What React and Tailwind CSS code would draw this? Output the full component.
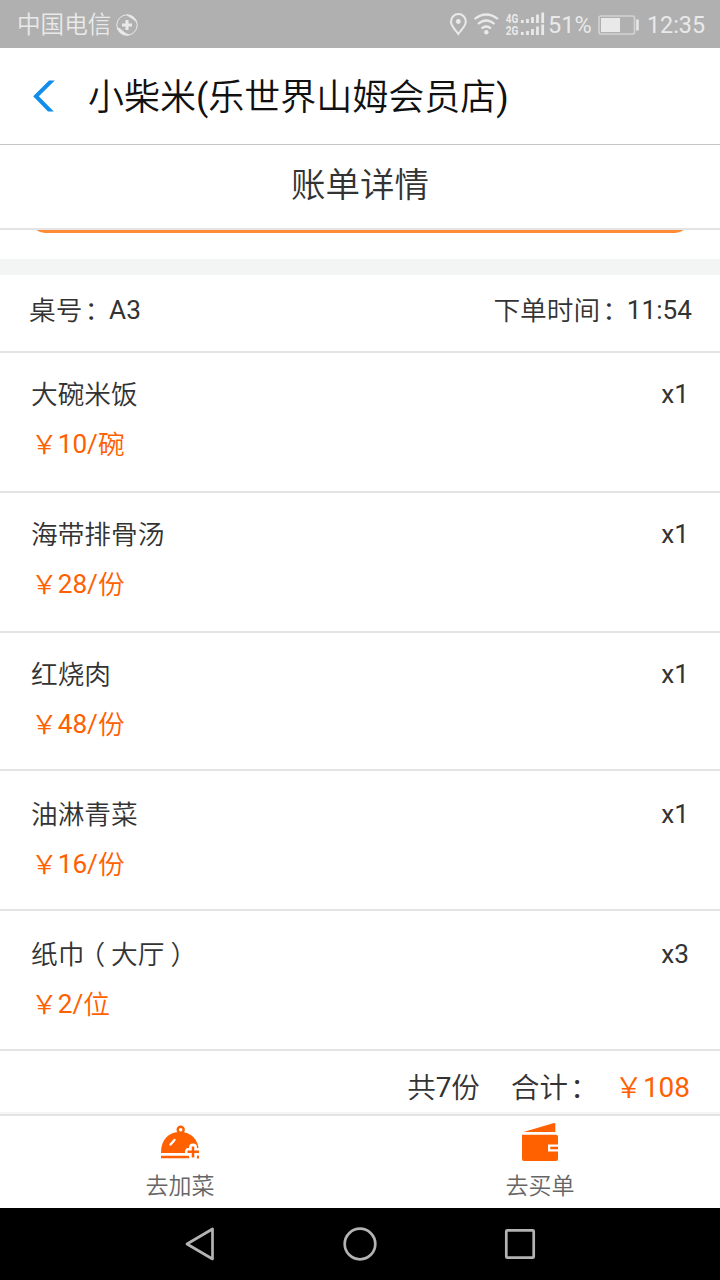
import React from "react";

const items = [
  { name: "大碗米饭", price: "10", unit: "碗", qty: "x1", row: "h-[140px] pt-[22px]" },
  { name: "海带排骨汤", price: "28", unit: "份", qty: "x1", row: "h-[140px] pt-[22px]" },
  { name: "红烧肉", price: "48", unit: "份", qty: "x1", row: "h-[138px] pt-[22px]" },
  { name: "油淋青菜", price: "16", unit: "份", qty: "x1", row: "h-[140px] pt-[24px]" },
  { name: "纸巾（大厅）", price: "2", unit: "位", qty: "x3", row: "h-[140px] pt-[24px]" },
];

const punctuation = {
  "（": "ml-[-6px] mr-[6px]",
  "）": "ml-[6px] mr-[-6px]",
  "：": "ml-[2px] mr-[-2px]",
};

function Zh({ children }) {
  return (
    <span className="whitespace-nowrap font-[350]">
      {children.split(/([（）：])/).map((part, i) =>
        punctuation[part] ? <span key={i} className={punctuation[part]}>{part}</span> : part
      )}
    </span>
  );
}

function Num({ children }) {
  return <span className="inline-block -translate-y-px text-[0.98em]">{children}</span>;
}

function StatusBar() {
  return (
    <header className="flex h-12 items-center bg-[#b0b0b0] pl-[17px] pr-[15px] text-[#e9e9e9]">
      <span className="pt-[3px] text-[23.6px] font-[350] leading-[45px]">中国电信</span>
      <svg className="ml-[4px] mt-[2px] h-6 w-6" viewBox="0 0 24 24" fill="none">
        <circle cx="12" cy="12" r="10.2" stroke="currentColor" strokeWidth="1" />
        <path d="M12 2 C16 2 20 4 21.500 9 C18.500 5.500 15 4.500 12 2Z M2.500 15 C6 15 8 20 14 21.800 C8 23 4 20 2.500 15Z" fill="currentColor" stroke="currentColor" strokeWidth="0.8" />
        <path d="M12 7v10M7 12h10" stroke="currentColor" strokeWidth="3" />
      </svg>
      <div className="flex-1" />
      <svg className="h-12 w-[98px] shrink-0" viewBox="449 0 98 48" fill="none" stroke="currentColor">
        <path d="M458.3 34 C455 29.5 451 26 451 21.5 A7.4 7.4 0 0 1 465.8 21.5 C465.8 26 461.6 29.500 458.300 34Z" strokeWidth="2" />
        <circle cx="458.300" cy="21.500" r="2.400" fill="currentColor" stroke="none" />
        <path d="M474.500 19 Q486.200 10 498 19 M478 24 Q486.200 17 494.500 24 M481.500 28.500 Q486.200 24.500 491 28.500" strokeWidth="2.200" />
        <circle cx="486.300" cy="32.300" r="2.200" fill="currentColor" stroke="none" />
        <text x="505.700" y="22.800" fill="currentColor" stroke="none" fontFamily="Roboto, sans-serif" fontWeight="700" fontSize="12.500" textLength="12.500" lengthAdjust="spacingAndGlyphs">4G</text>
        <text x="505.700" y="35" fill="currentColor" stroke="none" fontFamily="Roboto, sans-serif" fontWeight="700" fontSize="12.500" textLength="12.500" lengthAdjust="spacingAndGlyphs">2G</text>
        <path d="M522.300 20v3M527.500 19v4M532.500 17v6M537.500 14.500v8.500M542.700 12.500v10.500M522.300 32v3M527.500 31v4M532.500 29v6M537.500 26.500v8.500M542.700 24.500v10.500" strokeWidth="2.800" />
      </svg>
      <span className="ml-px w-[49px] pt-[3px] text-[23.500px] leading-[45px]">51%</span>
      <svg className="h-12 w-[42px] shrink-0" viewBox="597 0 42 48" fill="none">
        <rect x="599" y="16" width="35.500" height="18" rx="2" stroke="#d2d2d2" strokeWidth="1.700" />
        <path d="M601 18h19v14h-19z M636.200 19.500h2.500v11h-2.500z" fill="currentColor" />
      </svg>
      <span className="ml-[8px] pt-[2px] text-[23.300px] leading-[46px]">12:35</span>
    </header>
  );
}

function Item({ item }) {
  return (
    <li className={`${item.row} flex justify-between border-b-2 border-[#e4e4e4] pl-[31px] pr-[31px] text-[26.7px] leading-[40px] text-[#333]`}>
      <div>
        <p><Zh>{item.name}</Zh></p>
        <p className="mt-[10px] text-[#ff6000]">
          <Zh>￥</Zh><Num>{item.price}/</Num><Zh>{item.unit}</Zh>
        </p>
      </div>
      <Num>{item.qty}</Num>
    </li>
  );
}

function AddDishIcon() {
  return (
    <svg className="ml-[2px] h-[38px] w-[42px]" viewBox="160 1124 42 38">
      <circle cx="180.700" cy="1129.700" r="3" fill="none" stroke="#ff6000" strokeWidth="2.400" />
      <path d="M161 1153 C161 1139 169 1132 180 1132 C191 1132 199 1139 199 1153Z M161 1155.700h38v2.500h-38z" fill="#ff6000" />
      <path d="M170.500 1144.500l4-4.500" stroke="#fff" strokeWidth="2.400" strokeLinecap="round" />
      <path d="M193 1147.500v9M189 1151.700h8" stroke="#fff" strokeWidth="8" strokeLinecap="round" />
      <path d="M193 1146.500v11M187.500 1151.700h11.500" stroke="#ff6000" strokeWidth="2.500" />
      <path d="M197 1155.700h2v2.500h-2z" fill="#ff6000" />
    </svg>
  );
}

function WalletIcon() {
  return (
    <svg className="h-[40px] w-[38px]" viewBox="521 1122 38 40">
      <path d="M523.500 1132 L554 1123 Q555.300 1122.700 555.300 1124 V1132Z" fill="#ff6000" />
      <path d="M522 1134.700H556Q558 1134.700 558 1136.700V1144.500H548V1151.500H558V1159Q558 1161 556 1161H524Q522 1161 522 1159Z" fill="#ff6000" />
      <path d="M550.300 1146.700h7.700v2.600h-7.700z" fill="#ff6000" />
    </svg>
  );
}

export default function App() {
  return (
    <div className="flex h-[1280px] w-[720px] flex-col overflow-hidden bg-white font-['Roboto','Noto_Sans_CJK_SC',sans-serif]">
      <StatusBar />
      <div className="flex h-[97px] items-center border-b border-[#c4c4c4] pl-[32px]">
        <svg className="h-8 w-6" viewBox="0 0 24 32" fill="none">
          <path d="M22.800 0.500H17L1.200 16.300 16 31.500H21.800L6.800 16.300Z" fill="#108ee9" />
        </svg>
        <h1 className="ml-[32px] pt-[4px] text-[36px] font-normal leading-[92px] text-[#111]">
          <Zh>小柴米</Zh>(<Zh>乐世界山姆会员店</Zh>)
        </h1>
      </div>
      <div className="h-[85px] border-b-2 border-[#e4e4e4] text-center text-[34.500px] font-[350] leading-[81px] text-[#333]">账单详情</div>
      <div className="h-[29px] px-[31px]">
        <div className="flex h-[3px] flex-col justify-end overflow-hidden">
          <div className="h-10 shrink-0 rounded-[14px] bg-[#ff8c34]" />
        </div>
      </div>
      <div className="h-4 bg-[#f3f5f5]" />
      <div className="flex h-[78px] justify-between whitespace-nowrap border-b-2 border-[#e4e4e4] pl-[29px] pr-[28px] text-[26.700px] leading-[72px] text-[#333]">
        <span><Zh>桌号：</Zh><Num>A3</Num></span>
        <span><Zh>下单时间：</Zh><Num>11:54</Num></span>
      </div>
      <ul>
        {items.map((item) => <Item key={item.name} item={item} />)}
      </ul>
      <div className="flex h-[63px] justify-end whitespace-nowrap pr-[30px] text-[28.500px] leading-[75px] text-[#333]">
        <span><Zh>共</Zh><Num>7</Num><Zh>份</Zh></span>
        <span className="ml-[31px]"><Zh>合计：</Zh></span>
        <span className="ml-[18px] text-[#ff6000]"><Zh>￥</Zh><Num>108</Num></span>
      </div>
      <nav className="grid h-[94px] grid-cols-2 border-t-2 border-[#e4e4e4] shadow-[0_-2px_0_#f5f5f5]">
        <div className="flex flex-col items-center pt-[8px]">
          <AddDishIcon />
          <span className="mt-[9px] text-[23px] font-[350] leading-[32px] text-[#666]">去加菜</span>
        </div>
        <div className="flex flex-col items-center pt-[6px]">
          <WalletIcon />
          <span className="mt-[9px] text-[23px] font-[350] leading-[32px] text-[#666]">去买单</span>
        </div>
      </nav>
      <footer className="h-[72px] bg-black">
        <svg className="h-[72px] w-[720px]" viewBox="0 1208 720 72" fill="none" stroke="#b3b3b3" strokeWidth="2.700" strokeLinejoin="round">
          <path d="M187 1244L212.500 1229V1259Z" />
          <circle cx="360" cy="1244" r="15.300" />
          <rect x="506.300" y="1230.300" width="27.400" height="27.400" rx="1" />
        </svg>
      </footer>
    </div>
  );
}
